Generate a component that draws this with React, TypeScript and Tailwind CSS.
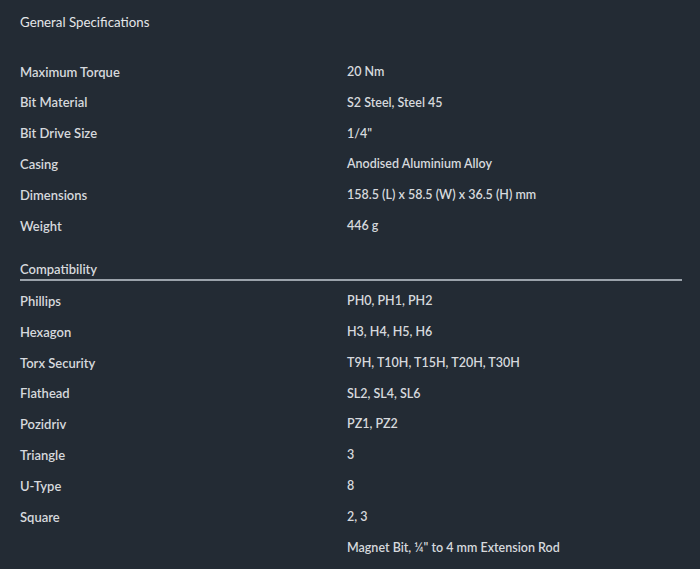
const general: [string, string][] = [
  ["Maximum Torque", "20 Nm"],
  ["Bit Material", "S2 Steel, Steel 45"],
  ["Bit Drive Size", "1/4\""],
  ["Casing", "Anodised Aluminium Alloy"],
  ["Dimensions", "158.5 (L) x 58.5 (W) x 36.5 (H) mm"],
  ["Weight", "446 g"],
];

const compat: [string, string][] = [
  ["Phillips", "PH0, PH1, PH2"],
  ["Hexagon", "H3, H4, H5, H6"],
  ["Torx Security", "T9H, T10H, T15H, T20H, T30H"],
  ["Flathead", "SL2, SL4, SL6"],
  ["Pozidriv", "PZ1, PZ2"],
  ["Triangle", "3"],
  ["U-Type", "8"],
  ["Square", "2, 3"],
  ["", "Magnet Bit, ¼\" to 4 mm Extension Rod"],
];

function Row({ label, value }: { label: string; value: string }) {
  return (
    <div className="flex h-[30.8px] items-center font-semibold text-[#d6d9dd]">
      <div className="w-[327px] shrink-0 text-[13px]">{label}</div>
      <div className="text-[12.5px]">{value}</div>
    </div>
  );
}

export default function App() {
  return (
    <div
      className="h-[569px] w-[700px] overflow-hidden bg-[#232b34] pl-5 pr-[18px] pt-px"
      style={{ fontFamily: "Lato, 'Open Sans', sans-serif" }}
    >
      <div className="flex h-11 items-center text-[13.3px] text-[#e4e6e9]">General Specifications</div>
      <div className="mt-[12px]">
        {general.map(([label, value], index) => (
          <Row key={index} label={label} value={value} />
        ))}
      </div>
      <div className="mt-[19px] border-b-2 border-[#9ba3ab] pb-[2px] text-[13px] font-semibold leading-4 text-[#d6d9dd]">
        Compatibility
      </div>
      <div className="mt-[5.5px]">
        {compat.map(([label, value], index) => (
          <Row key={index} label={label} value={value} />
        ))}
      </div>
    </div>
  );
}
